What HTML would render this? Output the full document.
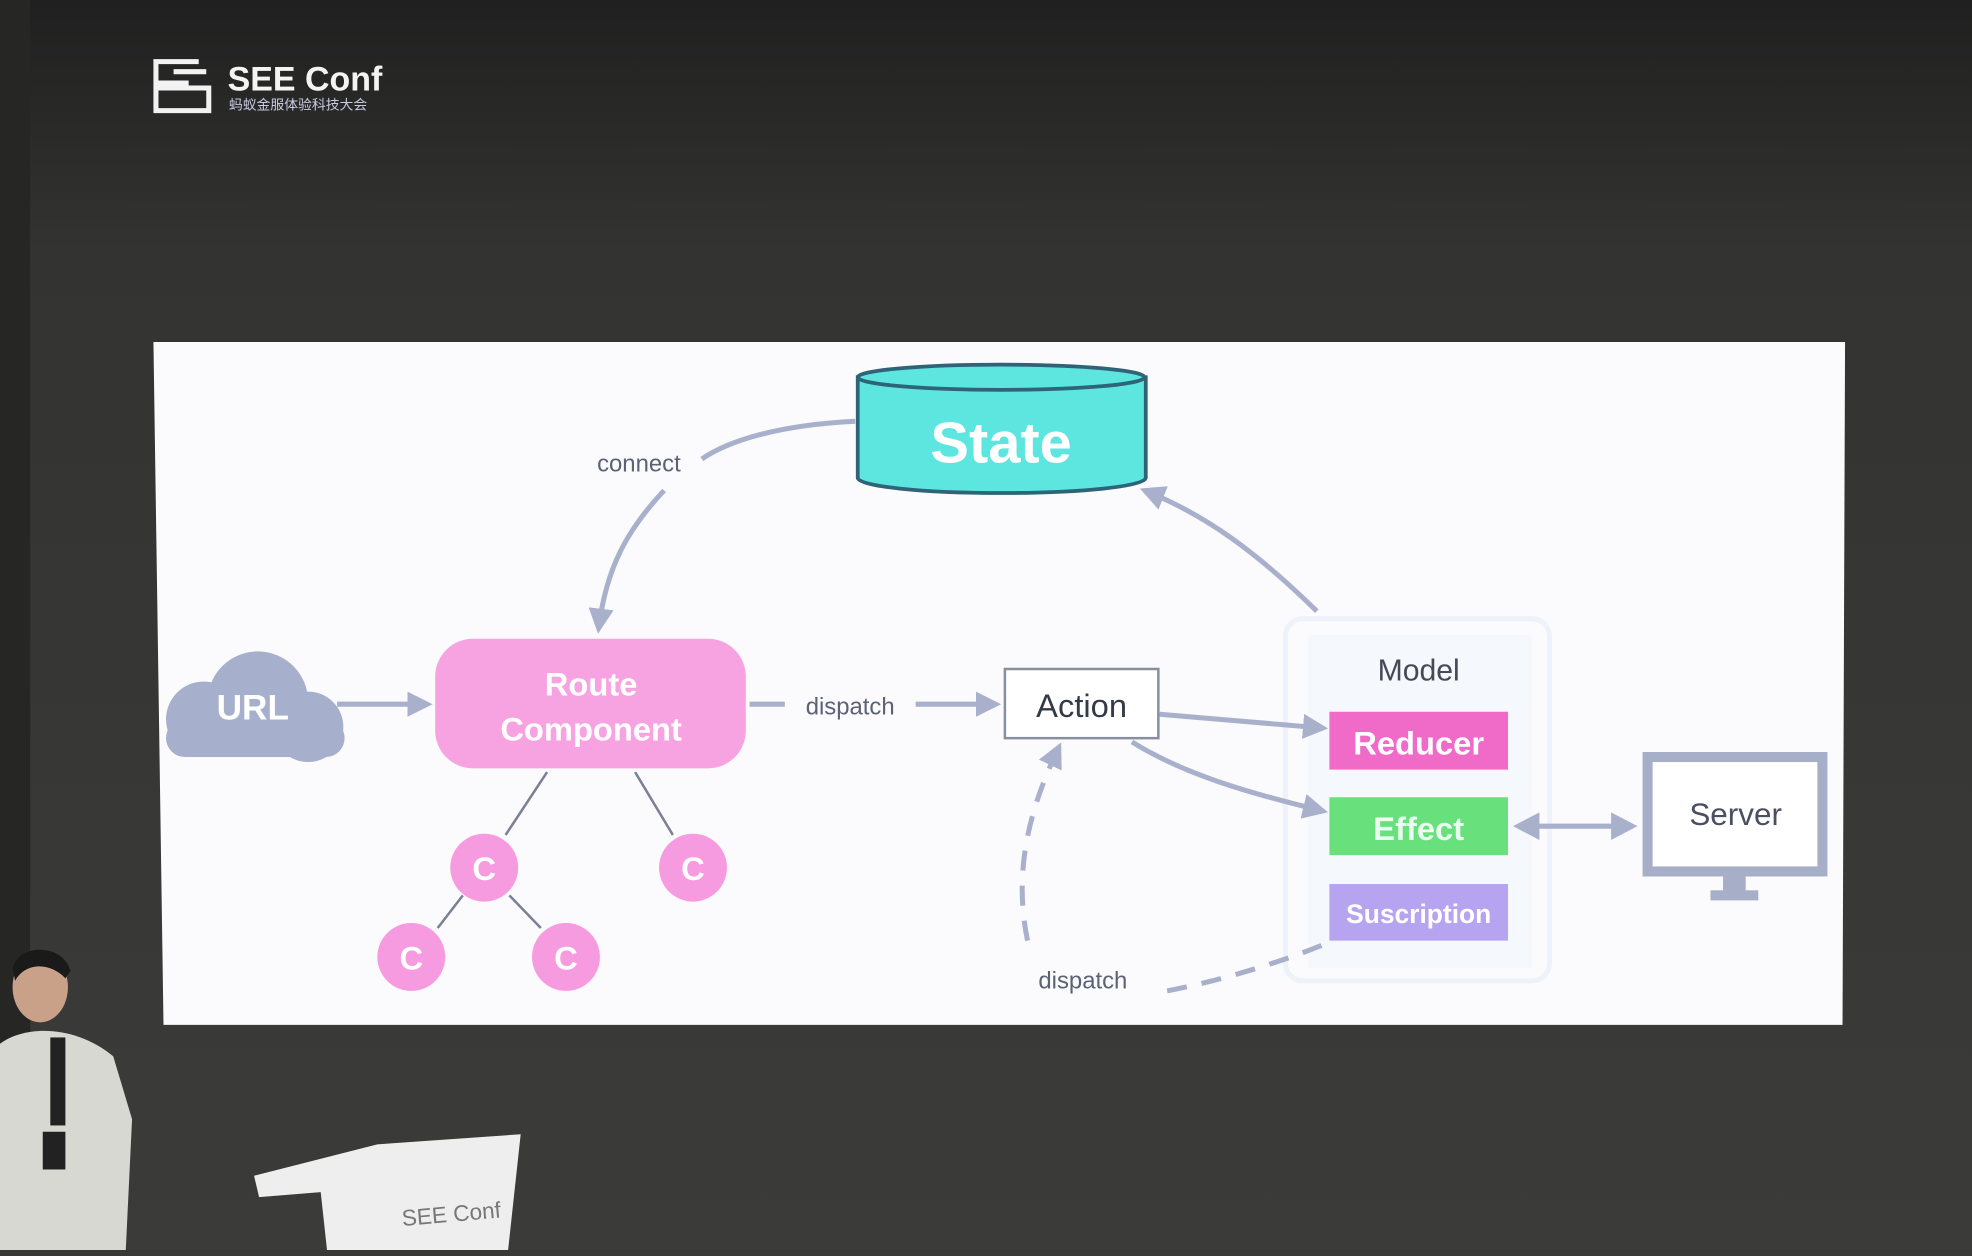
<!DOCTYPE html><html><head><meta charset="utf-8"><style>
body{margin:0;width:1972px;height:1250px;overflow:hidden;background:#383836}
#w{position:absolute;left:0;top:0;width:1568px;height:994px;transform:scale(1.2577,1.2575);transform-origin:0 0;font-family:"Liberation Sans",sans-serif}
</style></head><body><div id="w">
<svg width="1568" height="994" viewBox="0 0 1568 994" xmlns="http://www.w3.org/2000/svg">
<defs><linearGradient id="bg" x1="0" y1="0" x2="0" y2="1"><stop offset="0" stop-color="#202020"/><stop offset="0.2" stop-color="#333331"/><stop offset="1" stop-color="#3b3b39"/></linearGradient>
<marker id="a" markerWidth="24" markerHeight="24" refX="16" refY="10" orient="auto" markerUnits="userSpaceOnUse"><path d="M0,0 L20,10 L0,20 z" fill="#a8b0cc"/></marker></defs>
<rect width="1568" height="994" fill="url(#bg)"/>
<rect width="24" height="994" fill="#262625"/>
<g fill="none" stroke="#f2f2f2" stroke-width="4"><path d="M158,49 H124 V88 H166 V70 H126 M124,66 H150"/><path d="M138,57 H164"/></g>
<text x="181" y="72" fill="#f4f4f4" font-size="27" font-weight="bold">SEE Conf</text>
<text x="182" y="87" fill="#c8c8e0" font-size="11" font-family="Noto Sans CJK SC,sans-serif">蚂蚁金服体验科技大会</text>
<polygon points="122,272 1467,272 1465,815 130,815" fill="#fbfbfd"/>
<path d="M682,300 V380 A114,12 0 0 0 911,380 V300 Z" fill="#5de6e0" stroke="#2f6478" stroke-width="3"/>
<ellipse cx="796" cy="300" rx="114" ry="10" fill="#5de6e0" stroke="#2f6478" stroke-width="3"/>
<text x="796" y="368" fill="#fff" font-size="46" font-weight="bold" text-anchor="middle">State</text>
<rect x="1022" y="492" width="210" height="288" rx="14" fill="none" stroke="#eef2fa" stroke-width="4"/>
<rect x="1040" y="505" width="178" height="265" fill="#f5f8fc"/>
<g stroke="#a8b0cc" stroke-width="4" fill="none">
<path d="M680,335 C620,338 580,350 558,365"/>
<path d="M528,390 C500,420 482,450 476,500" marker-end="url(#a)"/>
<path d="M1047,486 C1000,440 960,410 910,390" marker-end="url(#a)"/>
<path d="M268,560 H340" marker-end="url(#a)"/>
<path d="M596,560 H624 M728,560 H792" marker-end="url(#a)"/>
<path d="M922,568 L1052,579" marker-end="url(#a)"/>
<path d="M900,590 C940,615 990,630 1052,645" marker-end="url(#a)"/>
<path d="M1220,657 H1286"/>
<path d="M817,748 C805,690 820,640 842,594" stroke-dasharray="16,12" marker-end="url(#a)"/>
<path d="M928,788 C970,780 1020,765 1060,748" stroke-dasharray="16,12"/>
</g>
<path d="M1203,657 L1224,646 L1224,668 Z M1302,657 L1281,646 L1281,668 Z" fill="#a8b0cc"/>
<g stroke="#7a8095" stroke-width="2"><path d="M435,614 L402,664 M505,614 L535,664 M368,712 L348,738 M405,712 L430,738"/></g>
<text x="508" y="375" fill="#5b6275" font-size="19" text-anchor="middle">connect</text>
<g fill="#a6b0cd"><circle cx="205" cy="558" r="40"/><circle cx="162" cy="572" r="30"/><circle cx="245" cy="578" r="28"/><rect x="132" y="572" width="142" height="30" rx="15"/></g>
<text x="201" y="572" fill="#fff" font-size="28" font-weight="bold" text-anchor="middle">URL</text>
<rect x="346" y="508" width="247" height="103" rx="30" fill="#f7a3e2"/>
<text x="470" y="553" fill="#fff" font-size="26" font-weight="bold" text-anchor="middle">Route</text>
<text x="470" y="589" fill="#fff" font-size="26" font-weight="bold" text-anchor="middle">Component</text>
<text x="676" y="568" fill="#5b6275" font-size="19" text-anchor="middle">dispatch</text>
<text x="861" y="786" fill="#5b6275" font-size="19" text-anchor="middle">dispatch</text>
<rect x="799" y="532" width="122" height="55" fill="#fff" stroke="#8890a0" stroke-width="2"/>
<text x="860" y="570" fill="#333a48" font-size="26" text-anchor="middle">Action</text>
<text x="1128" y="541" fill="#444a58" font-size="24" text-anchor="middle">Model</text>
<rect x="1057" y="566" width="142" height="46" fill="#f06ac8"/>
<text x="1128" y="600" fill="#fff" font-size="26" font-weight="bold" text-anchor="middle">Reducer</text>
<rect x="1057" y="634" width="142" height="46" fill="#68e07c"/>
<text x="1128" y="668" fill="#eafff0" font-size="26" font-weight="bold" text-anchor="middle">Effect</text>
<rect x="1057" y="703" width="142" height="45" fill="#b6a4f0"/>
<text x="1128" y="734" fill="#fff" font-size="21" font-weight="bold" text-anchor="middle">Suscription</text>
<rect x="1310" y="602" width="139" height="91" fill="#fff" stroke="#a6aec8" stroke-width="8"/>
<rect x="1370" y="697" width="18" height="12" fill="#a6aec8"/><rect x="1360" y="708" width="38" height="8" fill="#a6aec8"/>
<text x="1380" y="656" fill="#4a5060" font-size="25" text-anchor="middle">Server</text>
<g fill="#f79be0"><circle cx="385" cy="690" r="27"/><circle cx="551" cy="690" r="27"/><circle cx="327" cy="761" r="27"/><circle cx="450" cy="761" r="27"/></g>
<g fill="#fff" font-size="26" font-weight="bold" text-anchor="middle"><text x="385" y="700">C</text><text x="551" y="700">C</text><text x="327" y="771">C</text><text x="450" y="771">C</text></g>
<path d="M0,830 C20,815 60,815 90,840 L105,890 L100,994 H0 Z" fill="#d8d8d2"/>
<ellipse cx="32" cy="785" rx="22" ry="28" fill="#c9a088"/>
<path d="M10,770 C15,750 50,750 56,772 L52,778 C40,765 20,765 12,780Z" fill="#1a1a1a"/>
<rect x="40" y="825" width="12" height="70" fill="#222"/><rect x="34" y="900" width="18" height="30" fill="#222"/>
<polygon points="202,935 300,910 414,902 404,994 260,994 255,948 206,952" fill="#eeeeee"/>
<text x="320" y="975" fill="#777" font-size="18" transform="rotate(-5 320 975)">SEE Conf</text>
</svg></div></body></html>
